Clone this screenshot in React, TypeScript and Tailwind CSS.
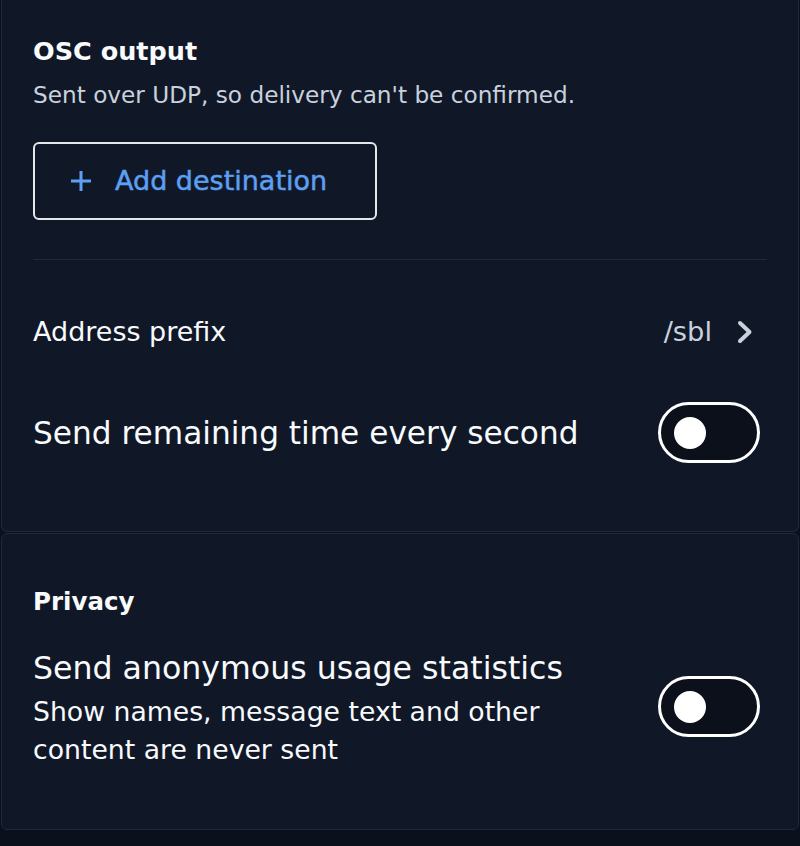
import React from "react";

function Toggle() {
  return (
    <div className="flex h-[61px] w-[102px] shrink-0 items-center rounded-full border-[3px] border-white bg-[#0b101b] pl-[13px]">
      <div className="h-[32px] w-[32px] rounded-full bg-white" />
    </div>
  );
}

export default function App() {
  return (
    <div
      className="min-h-[846px] bg-[#0a101c] text-[#f8fafc]"
      style={{ fontFamily: '"DejaVu Sans", "Noto Sans", sans-serif' }}
    >
      <div className="mx-[1px] rounded-b-[6px] border border-t-0 border-[#1f2939] bg-[#101828] px-[31px] pb-[68px]">
        <h2 className="pt-[36px] text-[25.5px] font-bold leading-[30px]">OSC output</h2>
        <p className="mt-[14px] text-[23.2px] leading-[30px] text-[#c9d1dd]">
          Sent over UDP, so delivery can't be confirmed.
        </p>
        <button className="mt-[32px] flex h-[78px] w-[344px] items-center rounded-[6px] border-2 border-[#e5e7eb] pl-[35px] text-[#5d9ff0]">
          <svg width="22" height="22" viewBox="0 0 22 22" className="shrink-0">
            <path d="M11 1v20M1 11h20" stroke="#5d9ff0" strokeWidth="3" fill="none" />
          </svg>
          <span className="ml-[23px] text-[27px] leading-[36px] [-webkit-text-stroke:0.5px_#5d9ff0]">
            Add destination
          </span>
        </button>
        <div className="mt-[39px] h-px bg-[#1f2939]" />
        <div className="mt-[54px] flex items-center justify-between">
          <span className="text-[27px] leading-[36px]">Address prefix</span>
          <div className="mr-[14px] flex items-center gap-[25px]">
            <span className="text-[27.3px] leading-[36px] text-[#c9d1dd]">/sbl</span>
            <svg width="16" height="24" viewBox="0 0 16 24">
              <polyline
                points="3,3 12.5,12 3,21"
                fill="none"
                stroke="#c9d1dd"
                strokeWidth="4"
                strokeLinecap="round"
                strokeLinejoin="round"
              />
            </svg>
          </div>
        </div>
        <div className="mt-[52px] flex items-center justify-between">
          <span className="text-[31.2px] leading-[40px]">Send remaining time every second</span>
          <div className="mr-[7px]">
            <Toggle />
          </div>
        </div>
      </div>

      <div className="mx-[1px] mt-[1px] rounded-[6px] border border-[#1f2939] bg-[#101828] px-[31px] pb-[60px] pt-[53px]">
        <h2 className="text-[24.5px] font-bold leading-[30px]">Privacy</h2>
        <div className="mt-[31px] flex items-center justify-between">
          <div className="w-[580px]">
            <div className="text-[31.6px] leading-[40px]">Send anonymous usage statistics</div>
            <div className="mt-[5px] text-[26.7px] leading-[38px]">
              Show names, message text and other content are never sent
            </div>
          </div>
          <div className="mb-[4px] mr-[7px]">
            <Toggle />
          </div>
        </div>
      </div>
    </div>
  );
}
